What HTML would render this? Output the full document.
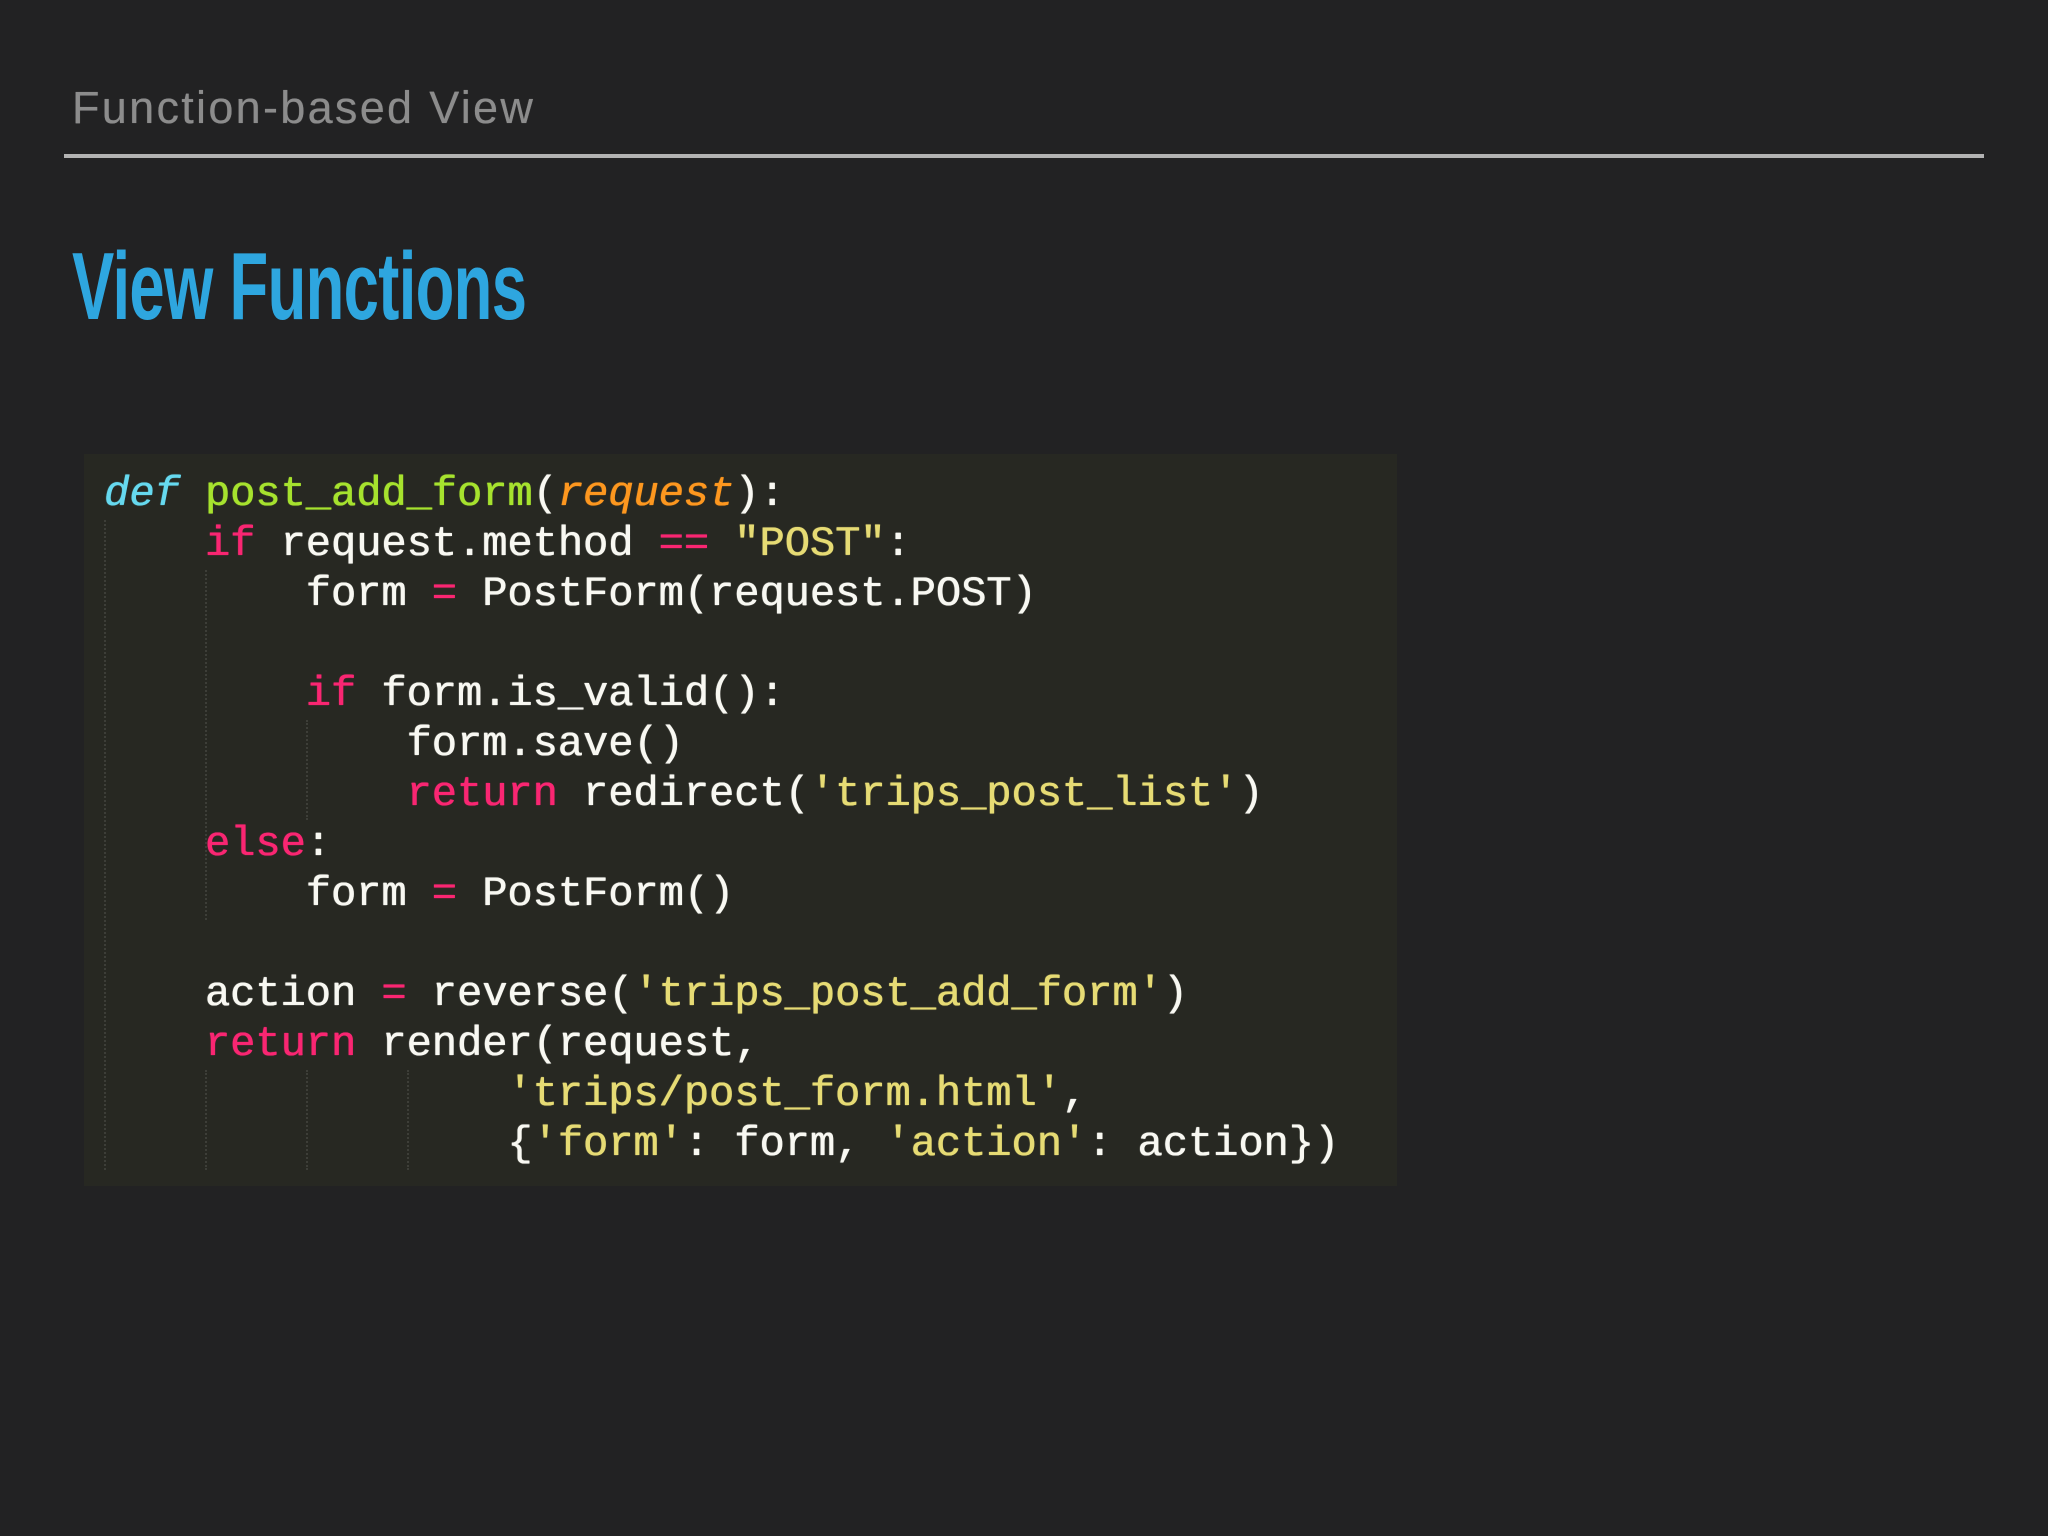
<!DOCTYPE html>
<html><head><meta charset="utf-8"><style>
html,body{margin:0;padding:0;}
body{width:2048px;height:1536px;background:#222223;position:relative;overflow:hidden;font-family:"Liberation Sans",sans-serif;}
.hdr{position:absolute;left:72px;top:82px;font-size:45px;color:#8c8c8c;letter-spacing:2.3px;white-space:nowrap;text-shadow:0 0 0.6px #8c8c8c;}
.rule{position:absolute;left:64px;top:154px;width:1920px;height:4px;background:#b3b3b3;}
.title{position:absolute;left:72px;top:232px;font-size:96px;font-weight:bold;color:#2ea6df;white-space:nowrap;transform:scaleX(0.66);transform-origin:left top;letter-spacing:-1px;}
.code{position:absolute;left:84px;top:454px;width:1313px;height:732px;background:#272822;}
pre{position:absolute;left:104px;top:469px;margin:0;font-family:"Liberation Mono","DejaVu Sans Mono",monospace;font-size:42px;line-height:50px;color:#f8f8f2;text-shadow:0 0 1px currentColor,0.5px 0 0 currentColor;}
.k{color:#f92672}.f{color:#a6e22e}.p{color:#fd971f;font-style:italic}.d{color:#66d9ef;font-style:italic}.s{color:#e6db74}
.g{position:absolute;width:0;border-left:2px dotted #3d3e38;}
</style></head><body>
<div class="hdr">Function-based View</div>
<div class="rule"></div>
<div class="title">View Functions</div>
<div class="code"></div>
<div class="g" style="left:104px;top:520px;height:650px"></div>
<div class="g" style="left:205px;top:570px;height:350px"></div>
<div class="g" style="left:205px;top:870px;height:50px"></div>
<div class="g" style="left:205px;top:1070px;height:100px"></div>
<div class="g" style="left:306px;top:720px;height:100px"></div>
<div class="g" style="left:306px;top:1070px;height:100px"></div>
<div class="g" style="left:407px;top:1070px;height:100px"></div>
<pre><span class="d">def</span> <span class="f">post_add_form</span>(<span class="p">request</span>):
    <span class="k">if</span> request.method <span class="k">==</span> <span class="s">"POST"</span>:
        form <span class="k">=</span> PostForm(request.POST)

        <span class="k">if</span> form.is_valid():
            form.save()
            <span class="k">return</span> redirect(<span class="s">'trips_post_list'</span>)
    <span class="k">else</span>:
        form <span class="k">=</span> PostForm()

    action <span class="k">=</span> reverse(<span class="s">'trips_post_add_form'</span>)
    <span class="k">return</span> render(request,
                <span class="s">'trips/post_form.html'</span>,
                {<span class="s">'form'</span>: form, <span class="s">'action'</span>: action})</pre>
</body></html>
